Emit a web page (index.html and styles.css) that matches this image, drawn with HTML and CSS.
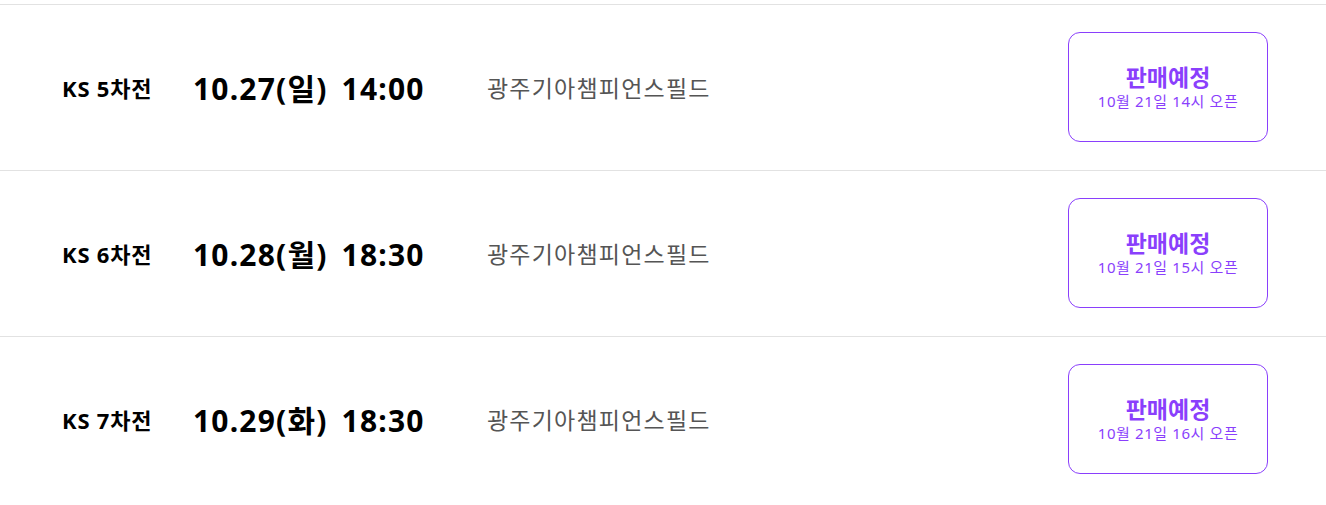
FILE: index.html
```html
<!DOCTYPE html>
<html lang="ko">
<head>
<meta charset="utf-8">
<link rel="stylesheet" href="styles.css">
</head>
<body>
<div class="list">
  <div class="row">
    <div class="round">KS 5차전</div>
    <div class="date">10.27(일) 14:00</div>
    <div class="venue">광주기아챔피언스필드</div>
    <div class="btn"><div class="btn-title">판매예정</div><div class="btn-sub">10월 21일 14시 오픈</div></div>
  </div>
  <div class="row">
    <div class="round">KS 6차전</div>
    <div class="date">10.28(월) 18:30</div>
    <div class="venue">광주기아챔피언스필드</div>
    <div class="btn"><div class="btn-title">판매예정</div><div class="btn-sub">10월 21일 15시 오픈</div></div>
  </div>
  <div class="row">
    <div class="round">KS 7차전</div>
    <div class="date">10.29(화) 18:30</div>
    <div class="venue">광주기아챔피언스필드</div>
    <div class="btn"><div class="btn-title">판매예정</div><div class="btn-sub">10월 21일 16시 오픈</div></div>
  </div>
</div>
</body>
</html>
```
FILE: styles.css
```css
html, body {
  margin: 0;
  padding: 0;
  background: #fff;
}
body {
  font-family: "Noto Sans", "Noto Sans CJK KR", sans-serif;
  color: #000;
}
.list {
  padding-top: 4px;
}
.row {
  display: flex;
  align-items: center;
  border-top: 1px solid #e2e2e2;
  padding: 27px 58px 28px 62px;
  height: 110px;
}
.round {
  width: 131px;
  font-size: 22px;
  font-weight: 700;
  letter-spacing: 0.8px;
  white-space: nowrap;
}
.date {
  width: 294px;
  font-size: 30px;
  font-weight: 700;
  letter-spacing: 1.2px;
  word-spacing: 5px;
  white-space: nowrap;
}
.venue {
  flex: 1;
  font-size: 23px;
  color: #555;
  letter-spacing: 1.2px;
  white-space: nowrap;
}
.btn {
  width: 198px;
  height: 108px;
  border: 1px solid #8a3ffc;
  border-radius: 12px;
  display: flex;
  flex-direction: column;
  align-items: center;
  justify-content: center;
  color: #8a3ffc;
}
.btn-title {
  font-size: 23px;
  font-weight: 700;
  line-height: 28px;
}
.btn-sub {
  font-size: 15px;
  line-height: 20px;
  letter-spacing: 0.6px;
}
```
